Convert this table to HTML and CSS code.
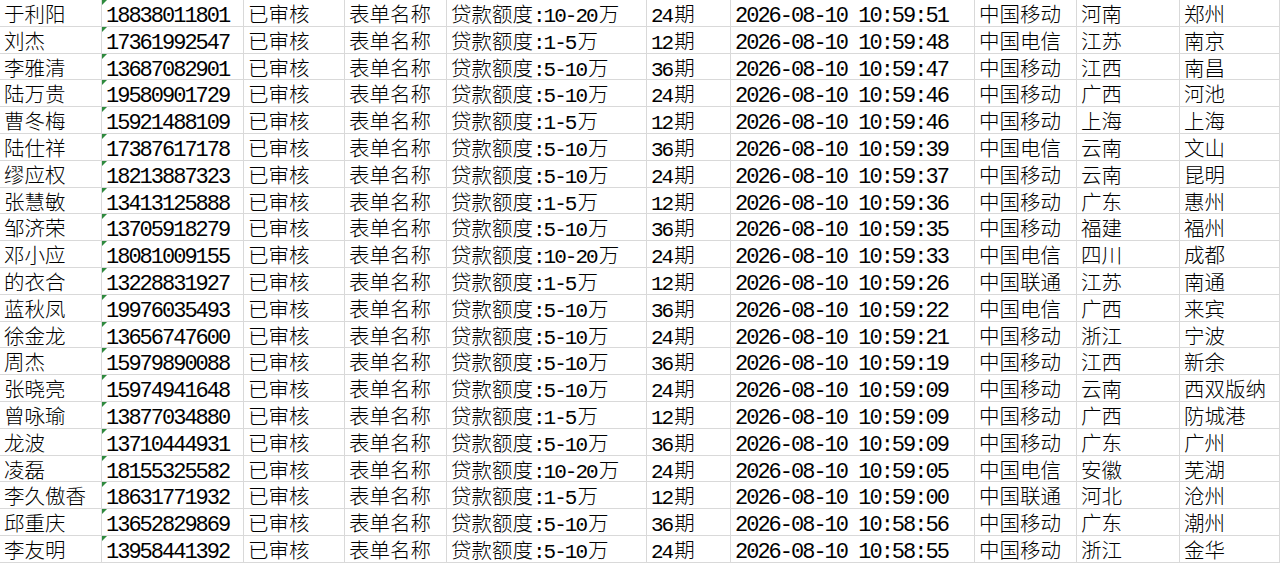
FILE: index.html
```html
<!DOCTYPE html>
<html lang="zh-CN">
<head>
<meta charset="utf-8">
<title>表单数据</title>
<link rel="stylesheet" href="styles.css">
</head>
<body>
<div class="sheet">
<div class="c">于利阳</div><div class="c tel"><span class="n">18838011801</span></div><div class="c">已审核</div><div class="c">表单名称</div><div class="c">贷款额度<span class="n m">:10-20</span>万</div><div class="c"><span class="n m">24</span>期</div><div class="c"><span class="n">2026-08-10 10:59:51</span></div><div class="c">中国移动</div><div class="c">河南</div><div class="c">郑州</div>
<div class="c">刘杰</div><div class="c tel"><span class="n">17361992547</span></div><div class="c">已审核</div><div class="c">表单名称</div><div class="c">贷款额度<span class="n m">:1-5</span>万</div><div class="c"><span class="n m">12</span>期</div><div class="c"><span class="n">2026-08-10 10:59:48</span></div><div class="c">中国电信</div><div class="c">江苏</div><div class="c">南京</div>
<div class="c">李雅清</div><div class="c tel"><span class="n">13687082901</span></div><div class="c">已审核</div><div class="c">表单名称</div><div class="c">贷款额度<span class="n m">:5-10</span>万</div><div class="c"><span class="n m">36</span>期</div><div class="c"><span class="n">2026-08-10 10:59:47</span></div><div class="c">中国移动</div><div class="c">江西</div><div class="c">南昌</div>
<div class="c">陆万贵</div><div class="c tel"><span class="n">19580901729</span></div><div class="c">已审核</div><div class="c">表单名称</div><div class="c">贷款额度<span class="n m">:5-10</span>万</div><div class="c"><span class="n m">24</span>期</div><div class="c"><span class="n">2026-08-10 10:59:46</span></div><div class="c">中国移动</div><div class="c">广西</div><div class="c">河池</div>
<div class="c">曹冬梅</div><div class="c tel"><span class="n">15921488109</span></div><div class="c">已审核</div><div class="c">表单名称</div><div class="c">贷款额度<span class="n m">:1-5</span>万</div><div class="c"><span class="n m">12</span>期</div><div class="c"><span class="n">2026-08-10 10:59:46</span></div><div class="c">中国移动</div><div class="c">上海</div><div class="c">上海</div>
<div class="c">陆仕祥</div><div class="c tel"><span class="n">17387617178</span></div><div class="c">已审核</div><div class="c">表单名称</div><div class="c">贷款额度<span class="n m">:5-10</span>万</div><div class="c"><span class="n m">36</span>期</div><div class="c"><span class="n">2026-08-10 10:59:39</span></div><div class="c">中国电信</div><div class="c">云南</div><div class="c">文山</div>
<div class="c">缪应权</div><div class="c tel"><span class="n">18213887323</span></div><div class="c">已审核</div><div class="c">表单名称</div><div class="c">贷款额度<span class="n m">:5-10</span>万</div><div class="c"><span class="n m">24</span>期</div><div class="c"><span class="n">2026-08-10 10:59:37</span></div><div class="c">中国移动</div><div class="c">云南</div><div class="c">昆明</div>
<div class="c">张慧敏</div><div class="c tel"><span class="n">13413125888</span></div><div class="c">已审核</div><div class="c">表单名称</div><div class="c">贷款额度<span class="n m">:1-5</span>万</div><div class="c"><span class="n m">12</span>期</div><div class="c"><span class="n">2026-08-10 10:59:36</span></div><div class="c">中国移动</div><div class="c">广东</div><div class="c">惠州</div>
<div class="c">邹济荣</div><div class="c tel"><span class="n">13705918279</span></div><div class="c">已审核</div><div class="c">表单名称</div><div class="c">贷款额度<span class="n m">:5-10</span>万</div><div class="c"><span class="n m">36</span>期</div><div class="c"><span class="n">2026-08-10 10:59:35</span></div><div class="c">中国移动</div><div class="c">福建</div><div class="c">福州</div>
<div class="c">邓小应</div><div class="c tel"><span class="n">18081009155</span></div><div class="c">已审核</div><div class="c">表单名称</div><div class="c">贷款额度<span class="n m">:10-20</span>万</div><div class="c"><span class="n m">24</span>期</div><div class="c"><span class="n">2026-08-10 10:59:33</span></div><div class="c">中国电信</div><div class="c">四川</div><div class="c">成都</div>
<div class="c">的衣合</div><div class="c tel"><span class="n">13228831927</span></div><div class="c">已审核</div><div class="c">表单名称</div><div class="c">贷款额度<span class="n m">:1-5</span>万</div><div class="c"><span class="n m">12</span>期</div><div class="c"><span class="n">2026-08-10 10:59:26</span></div><div class="c">中国联通</div><div class="c">江苏</div><div class="c">南通</div>
<div class="c">蓝秋凤</div><div class="c tel"><span class="n">19976035493</span></div><div class="c">已审核</div><div class="c">表单名称</div><div class="c">贷款额度<span class="n m">:5-10</span>万</div><div class="c"><span class="n m">36</span>期</div><div class="c"><span class="n">2026-08-10 10:59:22</span></div><div class="c">中国电信</div><div class="c">广西</div><div class="c">来宾</div>
<div class="c">徐金龙</div><div class="c tel"><span class="n">13656747600</span></div><div class="c">已审核</div><div class="c">表单名称</div><div class="c">贷款额度<span class="n m">:5-10</span>万</div><div class="c"><span class="n m">24</span>期</div><div class="c"><span class="n">2026-08-10 10:59:21</span></div><div class="c">中国移动</div><div class="c">浙江</div><div class="c">宁波</div>
<div class="c">周杰</div><div class="c tel"><span class="n">15979890088</span></div><div class="c">已审核</div><div class="c">表单名称</div><div class="c">贷款额度<span class="n m">:5-10</span>万</div><div class="c"><span class="n m">36</span>期</div><div class="c"><span class="n">2026-08-10 10:59:19</span></div><div class="c">中国移动</div><div class="c">江西</div><div class="c">新余</div>
<div class="c">张晓亮</div><div class="c tel"><span class="n">15974941648</span></div><div class="c">已审核</div><div class="c">表单名称</div><div class="c">贷款额度<span class="n m">:5-10</span>万</div><div class="c"><span class="n m">24</span>期</div><div class="c"><span class="n">2026-08-10 10:59:09</span></div><div class="c">中国移动</div><div class="c">云南</div><div class="c">西双版纳</div>
<div class="c">曾咏瑜</div><div class="c tel"><span class="n">13877034880</span></div><div class="c">已审核</div><div class="c">表单名称</div><div class="c">贷款额度<span class="n m">:1-5</span>万</div><div class="c"><span class="n m">12</span>期</div><div class="c"><span class="n">2026-08-10 10:59:09</span></div><div class="c">中国移动</div><div class="c">广西</div><div class="c">防城港</div>
<div class="c">龙波</div><div class="c tel"><span class="n">13710444931</span></div><div class="c">已审核</div><div class="c">表单名称</div><div class="c">贷款额度<span class="n m">:5-10</span>万</div><div class="c"><span class="n m">36</span>期</div><div class="c"><span class="n">2026-08-10 10:59:09</span></div><div class="c">中国移动</div><div class="c">广东</div><div class="c">广州</div>
<div class="c">凌磊</div><div class="c tel"><span class="n">18155325582</span></div><div class="c">已审核</div><div class="c">表单名称</div><div class="c">贷款额度<span class="n m">:10-20</span>万</div><div class="c"><span class="n m">24</span>期</div><div class="c"><span class="n">2026-08-10 10:59:05</span></div><div class="c">中国电信</div><div class="c">安徽</div><div class="c">芜湖</div>
<div class="c">李久傲香</div><div class="c tel"><span class="n">18631771932</span></div><div class="c">已审核</div><div class="c">表单名称</div><div class="c">贷款额度<span class="n m">:1-5</span>万</div><div class="c"><span class="n m">12</span>期</div><div class="c"><span class="n">2026-08-10 10:59:00</span></div><div class="c">中国联通</div><div class="c">河北</div><div class="c">沧州</div>
<div class="c">邱重庆</div><div class="c tel"><span class="n">13652829869</span></div><div class="c">已审核</div><div class="c">表单名称</div><div class="c">贷款额度<span class="n m">:5-10</span>万</div><div class="c"><span class="n m">36</span>期</div><div class="c"><span class="n">2026-08-10 10:58:56</span></div><div class="c">中国移动</div><div class="c">广东</div><div class="c">潮州</div>
<div class="c">李友明</div><div class="c tel"><span class="n">13958441392</span></div><div class="c">已审核</div><div class="c">表单名称</div><div class="c">贷款额度<span class="n m">:5-10</span>万</div><div class="c"><span class="n m">24</span>期</div><div class="c"><span class="n">2026-08-10 10:58:55</span></div><div class="c">中国移动</div><div class="c">浙江</div><div class="c">金华</div>
</div>
</body>
</html>
```
FILE: styles.css
```css
html, body {
  margin: 0;
  padding: 0;
  background: #ffffff;
}

body {
  width: 1280px;
  height: 563px;
  overflow: hidden;
}

.sheet {
  display: grid;
  grid-template-columns: 102px 142px 101px 102px 200px 84px 244px 102px 103px 100px;
  grid-auto-rows: 26.8px;
  border-top: 1px solid #d9d9d9;
  margin-top: -1px;
  font-family: "Noto Sans CJK SC", sans-serif;
  font-size: 20.5px;
  font-weight: 300;
  color: #000000;
}

.c {
  position: relative;
  box-sizing: border-box;
  border-right: 1px solid #d9d9d9;
  border-bottom: 1px solid #d9d9d9;
  padding-left: 4px;
  line-height: 26px;
  white-space: pre;
}

.n {
  display: inline-block;
  font-family: "Liberation Mono", monospace;
  font-size: 22px;
  font-weight: 400;
  line-height: 20px;
  letter-spacing: -2px;
  vertical-align: baseline;
}

.n.m {
  font-size: 21px;
  letter-spacing: -2px;
  margin-right: 2px;
}

.tel::before {
  content: "";
  position: absolute;
  top: 0;
  left: 0;
  border-top: 5px solid #2f8a3e;
  border-right: 5px solid transparent;
}
```
